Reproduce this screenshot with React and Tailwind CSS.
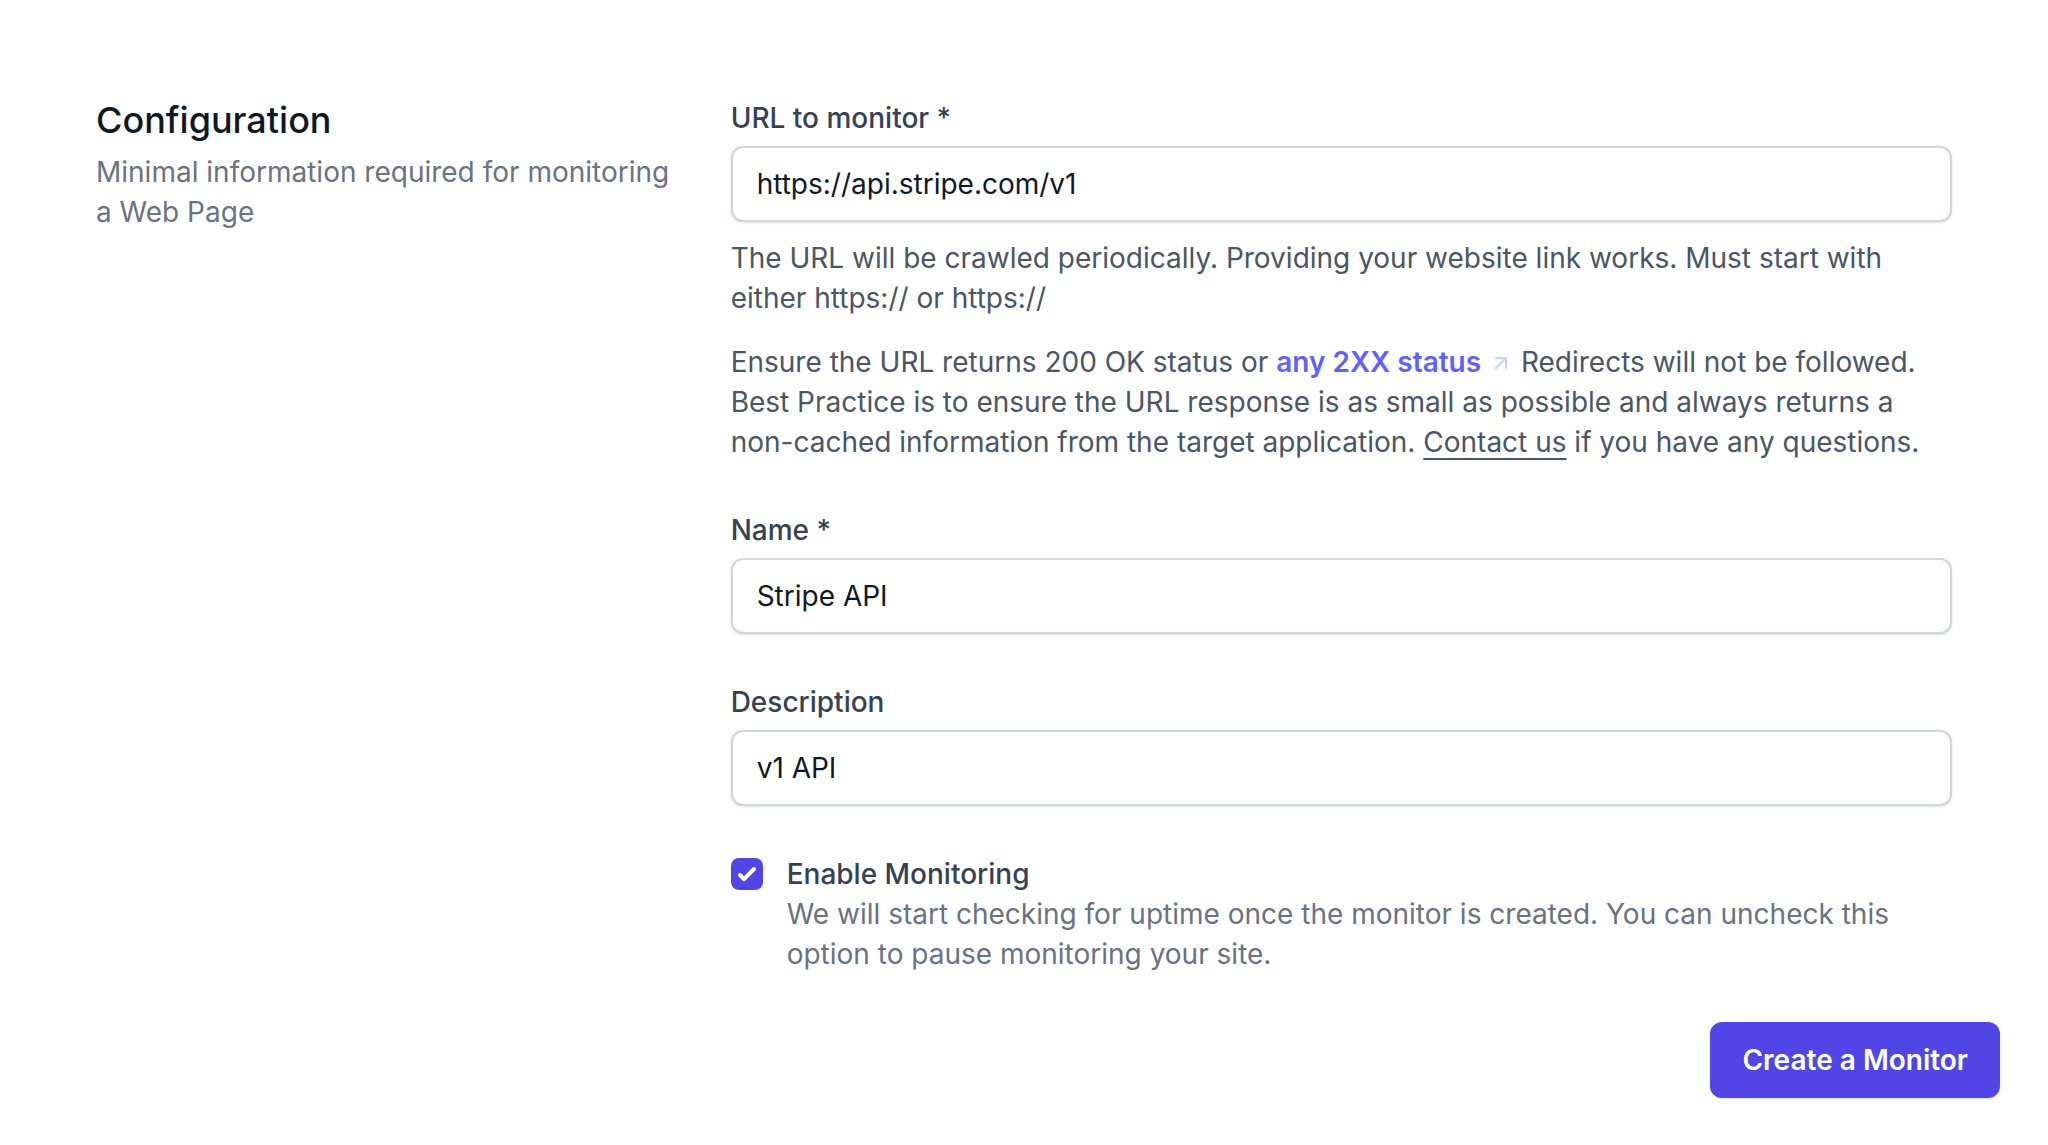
import React, { useState } from "react";

const CheckIcon = () => (
  <svg viewBox="0 0 16 16" fill="white" className="h-8 w-8">
    <path d="M12.207 4.793a1 1 0 010 1.414l-5 5a1 1 0 01-1.414 0l-2-2a1 1 0 011.414-1.414L6.5 9.086l4.293-4.293a1 1 0 011.414 0z" />
  </svg>
);

const ArrowUpRight = () => (
  <svg
    viewBox="0 0 24 24"
    fill="none"
    stroke="currentColor"
    strokeWidth="2"
    strokeLinecap="round"
    strokeLinejoin="round"
    className="inline-block h-6 w-6 align-[-3px] text-indigo-200"
  >
    <path d="M7 17 17 7" />
    <path d="M7 7h10v10" />
  </svg>
);

const Field = ({ label, value, children }) => (
  <div>
    <label className="block text-[28px] font-medium leading-[40px] text-gray-700">
      {label}
    </label>
    <input
      defaultValue={value}
      className="mt-2 block h-[76px] w-full rounded-xl border-2 border-gray-300 bg-white px-6 text-[28px] text-gray-900 shadow-sm outline-none"
    />
    {children}
  </div>
);

export default function App() {
  const [enabled, setEnabled] = useState(true);

  return (
    <div className="min-h-screen bg-white font-['Inter',sans-serif]">
      <div className="grid grid-cols-3 gap-12 px-24 pt-[98px]">
        {/* left: section title */}
        <div>
          <h3 className="-mt-0.5 text-[36px] font-medium leading-[48px] text-gray-900">
            Configuration
          </h3>
          <p className="mt-2 text-[28px] leading-[40px] text-gray-500">
            Minimal information required for monitoring a Web Page
          </p>
        </div>

        {/* right: form fields */}
        <div className="col-span-2 flex flex-col gap-12">
          <Field label="URL to monitor *" value="https://api.stripe.com/v1">
            <p className="mt-4 text-[28px] leading-[40px] text-gray-600">
              The URL will be crawled periodically. Providing your website link
              works. Must start with either https:// or https://
            </p>
            <p className="mt-6 text-[28px] leading-[40px] text-gray-600">
              Ensure the URL returns 200 OK status or{" "}
              <a href="#" className="font-semibold text-indigo-500">
                any 2XX status
              </a>{" "}
              <ArrowUpRight /> Redirects will not be followed. Best Practice is
              to ensure the URL response is as small as possible and always
              returns a non-cached information from the target application.{" "}
              <a
                href="#"
                className="underline decoration-2 underline-offset-[6px]"
              >
                Contact us
              </a>{" "}
              if you have any questions.
            </p>
          </Field>

          <Field label="Name *" value="Stripe API" />

          <Field label="Description" value="v1 API" />

          <div className="flex gap-6">
            <div className="flex h-10 items-center">
              <button
                type="button"
                onClick={() => setEnabled(!enabled)}
                className={
                  enabled
                    ? "flex h-8 w-8 items-center justify-center rounded-lg bg-[#4f46e5]"
                    : "flex h-8 w-8 items-center justify-center rounded-lg border-2 border-gray-300 bg-white"
                }
              >
                {enabled && <CheckIcon />}
              </button>
            </div>
            <div>
              <label className="block text-[28px] font-medium leading-[40px] text-gray-700">
                Enable Monitoring
              </label>
              <p className="text-[28px] leading-[40px] text-gray-500">
                We will start checking for uptime once the monitor is created.
                You can uncheck this option to pause monitoring your site.
              </p>
            </div>
          </div>
        </div>
      </div>

      <div className="mt-12 flex justify-end px-12">
        <button className="rounded-xl bg-[#4f46e5] px-8 py-[18px] text-[28px] font-semibold leading-[40px] text-white shadow-sm">
          Create a Monitor
        </button>
      </div>
    </div>
  );
}
